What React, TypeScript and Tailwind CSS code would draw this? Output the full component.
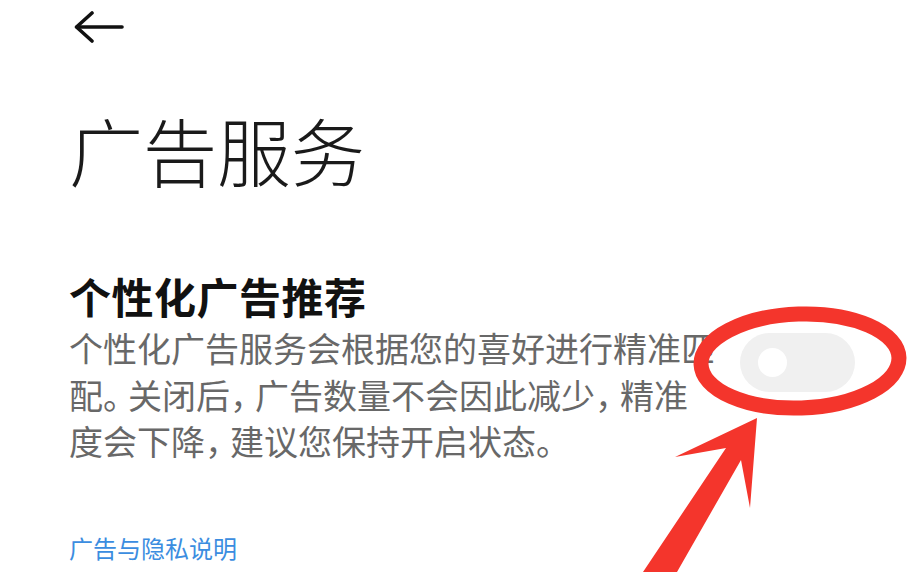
import React from "react";

function P({ c }: { c: string }) {
  return <span className="tracking-[-9px]">{c}</span>;
}

export default function App() {
  return (
    <div className="relative w-[923px] h-[572px] overflow-hidden bg-white font-['Noto_Sans_CJK_SC','Noto_Sans',sans-serif]">
      <div className="flex flex-col pl-[69px]">
        <svg
          className="mt-[11px] ml-[5px] block"
          width="50"
          height="32"
          viewBox="0 0 50 32"
          fill="none"
          stroke="#111111"
          strokeWidth="3.6"
          strokeLinecap="round"
          strokeLinejoin="round"
        >
          <path d="M18 2 L2.5 16 L18 30" />
          <path d="M3 16 H48" />
        </svg>

        <h1 className="mt-[69px] text-[74px] leading-[74px] font-light text-[#1a1a1a] whitespace-nowrap">
          广告服务
        </h1>

        <div className="mt-[89px] flex items-start">
          <div className="w-[671px] flex flex-col">
            <h2 className="text-[42px] leading-[42px] font-bold text-[#111111] whitespace-nowrap tracking-[0.5px]">
              个性化广告推荐
            </h2>
            <div className="mt-[8px] text-[34px] leading-[46.5px] text-[#686868]">
              <div className="whitespace-nowrap">个性化广告服务会根据您的喜好进行精准匹</div>
              <div className="whitespace-nowrap">
                配<P c="。" />关闭后<P c="，" />广告数量不会因此减少<P c="，" />精准
              </div>
              <div className="whitespace-nowrap">
                度会下降<P c="，" />建议您保持开启状态。
              </div>
            </div>
          </div>
          <div className="mt-[58px] w-[115px] h-[59px] rounded-full bg-[#f0f0f0] flex items-center pl-[18px]">
            <div className="w-[29px] h-[29px] rounded-full bg-white" />
          </div>
        </div>

        <a className="mt-[71px] text-[24px] leading-[23px] text-[#3b8de0] whitespace-nowrap">
          广告与隐私说明
        </a>
      </div>

      <svg
        className="pointer-events-none absolute inset-0"
        width="923"
        height="572"
        viewBox="0 0 923 572"
      >
        <ellipse
          cx="800"
          cy="361"
          rx="99"
          ry="47"
          fill="none"
          stroke="#f4352c"
          strokeWidth="15"
          transform="rotate(-2 800 361)"
        />
        <polygon
          points="643,572 726,448 675,457 757,418 750,508 741,460 677,572"
          fill="#f4352c"
        />
      </svg>
    </div>
  );
}
